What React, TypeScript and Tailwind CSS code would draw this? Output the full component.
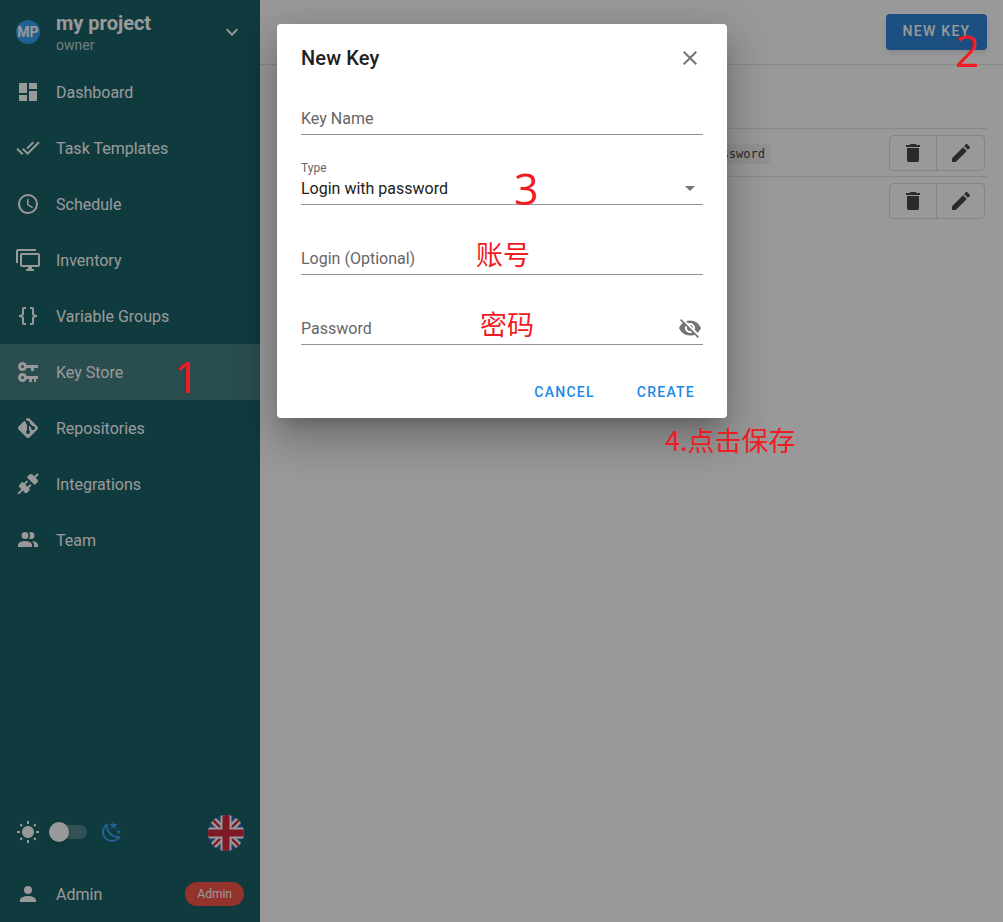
const paths = {
    dashboard: 'M13,3V9H21V3M13,21H21V11H13M3,21H11V15H3M3,13H11V3H3V13Z',
    checkAll: 'M0.41,13.41L6,19L7.41,17.58L1.83,12M22.24,5.58L11.66,16.17L7.5,12L6.07,13.41L11.66,19L23.66,7M18,7L16.59,5.58L10.24,11.93L11.66,13.34L18,7Z',
    clock: 'M12,20A8,8 0 0,0 20,12A8,8 0 0,0 12,4A8,8 0 0,0 4,12A8,8 0 0,0 12,20M12,2A10,10 0 0,1 22,12A10,10 0 0,1 12,22C6.47,22 2,17.5 2,12A10,10 0 0,1 12,2M12.5,7V12.25L17,14.92L16.25,16.15L11,13V7H12.5Z',
    monitors: 'M22,17V7H6V17H22M22,5A2,2 0 0,1 24,7V17C24,18.11 23.1,19 22,19H16V21H18V23H10V21H12V19H6C4.89,19 4,18.11 4,17V7A2,2 0 0,1 6,5H22M2,3V15H0V3A2,2 0 0,1 2,1H20V3H2Z',
    braces: 'M8,3A2,2 0 0,0 6,5V9A2,2 0 0,1 4,11H3V13H4A2,2 0 0,1 6,15V19A2,2 0 0,0 8,21H10V19H8V14A2,2 0 0,0 6,12A2,2 0 0,0 8,10V5H10V3M16,3A2,2 0 0,1 18,5V9A2,2 0 0,0 20,11H21V13H20A2,2 0 0,0 18,15V19A2,2 0 0,1 16,21H14V19H16V14A2,2 0 0,1 18,12A2,2 0 0,1 16,10V5H14V3H16Z',
    keys: 'M6.5,2C8.46,2 10.13,3.25 10.74,5H22V8H18V11H15V8H10.74C10.13,9.75 8.46,11 6.5,11C4,11 2,9 2,6.5C2,4 4,2 6.5,2M6.5,5A1.5,1.5 0 0,0 5,6.5A1.5,1.5 0 0,0 6.5,8A1.5,1.5 0 0,0 8,6.5A1.5,1.5 0 0,0 6.5,5M6.5,13C8.46,13 10.13,14.25 10.74,16H22V19H20V22H18V19H16V22H13V19H10.74C10.13,20.75 8.46,22 6.5,22C4,22 2,20 2,17.5C2,15 4,13 6.5,13M6.5,16A1.5,1.5 0 0,0 5,17.5A1.5,1.5 0 0,0 6.5,19A1.5,1.5 0 0,0 8,17.5A1.5,1.5 0 0,0 6.5,16Z',
    git: 'M2.6,10.59L8.38,4.8L10.07,6.5C9.83,7.35 10.22,8.28 11,8.73V14.27C10.4,14.61 10,15.26 10,16A2,2 0 0,0 12,18A2,2 0 0,0 14,16C14,15.26 13.6,14.61 13,14.27V9.41L15.07,11.5C15,11.65 15,11.82 15,12A2,2 0 0,0 17,14A2,2 0 0,0 19,12A2,2 0 0,0 17,10C16.82,10 16.65,10 16.5,10.07L13.93,7.5C14.19,6.57 13.71,5.55 12.78,5.16C12.35,5 11.9,4.96 11.5,5.07L9.8,3.38L10.59,2.6C11.37,1.81 12.63,1.81 13.41,2.6L21.4,10.59C22.19,11.37 22.19,12.63 21.4,13.41L13.41,21.4C12.63,22.19 11.37,22.19 10.59,21.4L2.6,13.41C1.81,12.63 1.81,11.37 2.6,10.59Z',
    connection: 'M21.4 7.5C22.2 8.3 22.2 9.6 21.4 10.3L18.6 13.1L10.8 5.3L13.6 2.5C14.4 1.7 15.7 1.7 16.5 2.5L18.3 4.3L21.3 1.3L22.7 2.7L19.7 5.7L21.4 7.5M15.6 13.3L14.2 11.9L11.4 14.7L9.3 12.6L12.1 9.8L10.7 8.4L7.9 11.2L6.4 9.8L3.6 12.6C2.8 13.4 2.8 14.7 3.6 15.4L5.4 17.2L1.4 21.2L2.8 22.6L6.8 18.6L8.6 20.4C9.4 21.2 10.7 21.2 11.4 20.4L14.2 17.6L12.8 16.2L15.6 13.3Z',
    team: 'M16 17V19H2V17S2 13 9 13 16 17 16 17M12.5 7.5A3.5 3.5 0 1 0 9 11A3.5 3.5 0 0 0 12.5 7.5M15.94 13A5.32 5.32 0 0 1 18 17V19H22V17S22 13.37 15.94 13M15 4A3.39 3.39 0 0 0 13.07 4.59A5 5 0 0 1 13.07 10.41A3.39 3.39 0 0 0 15 11A3.5 3.5 0 0 0 15 4Z',
    account: 'M12,4A4,4 0 0,1 16,8A4,4 0 0,1 12,12A4,4 0 0,1 8,8A4,4 0 0,1 12,4M12,14C16.42,14 20,15.79 20,18V20H4V18C4,15.79 7.58,14 12,14Z',
    sun: 'M3.55 19.09L4.96 20.5L6.76 18.71L5.34 17.29M12 6C8.69 6 6 8.69 6 12S8.69 18 12 18 18 15.31 18 12C18 8.68 15.31 6 12 6M20 13H23V11H20M17.24 18.71L19.04 20.5L20.45 19.09L18.66 17.29M20.45 5L19.04 3.6L17.24 5.39L18.66 6.81M13 1H11V4H13M6.76 5.39L4.96 3.6L3.55 5L5.34 6.81L6.76 5.39M1 13H4V11H1M13 20H11V23H13',
    night: 'M17.75,4.09L15.22,6.03L16.13,9.09L13.5,7.28L10.87,9.09L11.78,6.03L9.25,4.09L12.44,4L13.5,1L14.56,4L17.75,4.09M21.25,11L19.61,12.25L20.2,14.23L18.5,13.06L16.8,14.23L17.39,12.25L15.75,11L17.81,10.95L18.5,9L19.19,10.95L21.25,11M18.97,15.95C19.8,15.87 20.69,17.05 20.16,17.8C19.84,18.25 19.5,18.67 19.08,19.07C15.17,23 8.84,23 4.94,19.07C1.03,15.17 1.03,8.83 4.94,4.93C5.34,4.53 5.76,4.17 6.21,3.85C6.96,3.32 8.14,4.21 8.06,5.04C7.79,7.9 8.75,10.87 10.95,13.06C13.14,15.26 16.1,16.22 18.97,15.95M17.33,17.97C14.5,17.81 11.7,16.64 9.53,14.5C7.36,12.31 6.2,9.5 6.04,6.68C3.23,9.82 3.34,14.64 6.35,17.66C9.37,20.67 14.19,20.78 17.33,17.97Z',
    chevron: 'M7.41,8.58L12,13.17L16.59,8.58L18,10L12,16L6,10L7.41,8.58Z',
    trash: 'M19,4H15.5L14.5,3H9.5L8.5,4H5V6H19M6,19A2,2 0 0,0 8,21H16A2,2 0 0,0 18,19V7H6V19Z',
    pencil: 'M20.71,7.04C21.1,6.65 21.1,6 20.71,5.63L18.37,3.29C18,2.9 17.35,2.9 16.96,3.29L15.12,5.12L18.87,8.87M3,17.25V21H6.75L17.81,9.93L14.06,6.18L3,17.25Z',
    close: 'M19,6.41L17.59,5L12,10.59L6.41,5L5,6.41L10.59,12L5,17.59L6.41,19L12,13.41L17.59,19L19,17.59L13.41,12L19,6.41Z',
    caret: 'M7,10L12,15L17,10H7Z',
    eyeOff: 'M11.83,9L15,12.16C15,12.11 15,12.05 15,12A3,3 0 0,0 12,9C11.94,9 11.89,9 11.83,9M7.53,9.8L9.08,11.35C9.03,11.56 9,11.77 9,12A3,3 0 0,0 12,15C12.22,15 12.44,14.97 12.65,14.92L14.2,16.47C13.53,16.8 12.79,17 12,17A5,5 0 0,1 7,12C7,11.21 7.2,10.47 7.53,9.8M2,4.27L4.28,6.55L4.73,7C3.08,8.3 1.78,10 1,12C2.73,16.39 7,19.5 12,19.5C13.55,19.5 15.03,19.2 16.38,18.66L16.81,19.08L19.73,22L21,20.73L3.27,3M12,7A5,5 0 0,1 17,12C17,12.64 16.87,13.26 16.64,13.82L19.57,16.75C21.07,15.5 22.27,13.86 23,12C21.27,7.61 17,4.5 12,4.5C10.6,4.5 9.26,4.75 8,5.2L10.17,7.35C10.74,7.13 11.35,7 12,7Z',
};

function Icon({ d, className = '' }: { d: string; className?: string }) {
    return (
        <svg viewBox="0 0 24 24" className={`w-6 h-6 shrink-0 fill-current ${className}`}>
            <path d={d} />
        </svg>
    );
}

const navItems = [
    { label: 'Dashboard', icon: paths.dashboard },
    { label: 'Task Templates', icon: paths.checkAll },
    { label: 'Schedule', icon: paths.clock },
    { label: 'Inventory', icon: paths.monitors },
    { label: 'Variable Groups', icon: paths.braces },
    { label: 'Key Store', icon: paths.keys, active: true },
    { label: 'Repositories', icon: paths.git },
    { label: 'Integrations', icon: paths.connection },
    { label: 'Team', icon: paths.team },
];

function UkFlag() {
    return (
        <svg viewBox="0 0 36 36" className="w-9 h-9 rounded-full shrink-0">
            <rect width="36" height="36" fill="#1f4ea8" />
            <path d="M0 0L36 36M36 0L0 36" stroke="#fff" strokeWidth="7" />
            <path d="M0 0L36 36M36 0L0 36" stroke="#cf142b" strokeWidth="2.4" />
            <path d="M18 0V36M0 18H36" stroke="#fff" strokeWidth="11" />
            <path d="M18 0V36M0 18H36" stroke="#cf142b" strokeWidth="7" />
        </svg>
    );
}

function Sidebar() {
    return (
        <aside className="w-[260px] shrink-0 h-full bg-[#005057] text-white flex flex-col">
            <div className="h-[64px] flex items-center pl-4 pr-4 shrink-0">
                <div className="w-6 h-6 rounded-full bg-[#2196f3] flex items-center justify-center text-[14px] font-bold">MP</div>
                <div className="ml-4 flex-1">
                    <div className="text-[20px] leading-[24px] font-bold">my project</div>
                    <div className="text-[14px] leading-[18px] opacity-70 mt-[1px]">owner</div>
                </div>
                <Icon d={paths.chevron} />
            </div>

            {navItems.map((item) => (
                <div key={item.label} className={`h-[56px] shrink-0 flex items-center pl-4 ${item.active ? 'bg-white/[0.2]' : ''}`}>
                    <Icon d={item.icon} />
                    <span className="ml-4 text-[16px] pt-[2px]">{item.label}</span>
                </div>
            ))}

            <div className="mt-auto h-[62px] flex items-center pl-4 pr-4">
                <Icon d={paths.sun} />
                <div className="relative w-[38px] h-[14px] rounded-full bg-white/[0.25] ml-[9px] mr-[13px]">
                    <div className="absolute left-0 -top-[3px] w-5 h-5 rounded-full bg-white shadow-md" />
                </div>
                <Icon d={paths.night} className="text-[#2196f3]" />
                <div className="ml-auto mt-[2px]"><UkFlag /></div>
            </div>

            <div className="h-[62px] flex items-center pl-4 pr-4 shrink-0 mb-[-3px]">
                <Icon d={paths.account} />
                <span className="ml-4 text-[16px] pt-[2px]">Admin</span>
                <span className="ml-auto h-6 px-3 rounded-full bg-[#f44336] text-[12px] flex items-center">Admin</span>
            </div>
        </aside>
    );
}

function KeyRow({ last }: { last?: boolean }) {
    return (
        <div className={`h-[48px] flex items-center justify-end pr-[2px] ${last ? '' : 'border-b border-[#e0e0e0]'}`}>
            {!last && (
                <div className="mr-[119px] mt-[2px] rounded-[3px] bg-black/[0.05] px-[5px] py-[2px] text-[12px] leading-[16px] text-[#333] font-['DejaVu_Sans_Mono',monospace]">
                    login_password
                </div>
            )}
            <div className="flex h-9 border border-[#d8d8d8] rounded-[4px] text-[#333]">
                <div className="w-[47px] flex items-center justify-center border-r border-[#d8d8d8]"><Icon d={paths.trash} /></div>
                <div className="w-[47px] flex items-center justify-center"><Icon d={paths.pencil} /></div>
            </div>
        </div>
    );
}

function Main() {
    return (
        <main className="flex-1 h-full bg-white">
            <div className="h-[65px] flex items-center justify-end border-b border-[#e0e0e0] pr-4 pb-[1px]">
                <button className="w-[101px] h-9 rounded-[4px] bg-[#1976d2] text-white text-[14px] font-medium tracking-[0.09em] shadow-md">NEW KEY</button>
            </div>
            <div className="ml-4 mr-4 mt-[63px] border-t border-[#e0e0e0]">
                <KeyRow />
                <KeyRow last />
            </div>
        </main>
    );
}

function Field({ label, trailing }: { label: string; trailing?: string }) {
    return (
        <div className="h-[42px] flex items-end justify-between border-b border-[#949494] pb-[3px]">
            <span className="text-[16px] leading-[24px] text-[#666]">{label}</span>
            {trailing && <Icon d={trailing} className="text-[#757575] mr-px mb-px" />}
        </div>
    );
}

function Dialog() {
    return (
        <div className="absolute left-[277px] top-[24px] w-[450px] h-[394px] bg-white rounded-[4px] shadow-[0_11px_15px_-7px_rgba(0,0,0,0.2),0_24px_38px_3px_rgba(0,0,0,0.14),0_9px_46px_8px_rgba(0,0,0,0.12)]">
            <div className="h-[68px] flex items-center justify-between pl-6 pr-6">
                <span className="text-[20px] font-medium text-[#212121] tracking-[0.006em]">New Key</span>
                <Icon d={paths.close} className="text-[#757575] mr-px" />
            </div>
            <div className="px-6 pt-px flex flex-col gap-[28px]">
                <Field label="Key Name" />
                <div className="h-[42px] flex flex-col justify-end border-b border-[#949494] pb-[3px] relative">
                    <span className="text-[12px] leading-[14px] mb-[2px] text-[#666]">Type</span>
                    <span className="text-[16px] leading-[24px] text-[#212121]">Login with password</span>
                    <Icon d={paths.caret} className="absolute right-px bottom-[4px] text-[#757575]" />
                </div>
                <Field label="Login (Optional)" />
                <Field label="Password" trailing={paths.eyeOff} />
            </div>
            <div className="mt-[29px] flex justify-end gap-[10px] pr-[16px]">
                <button className="h-9 px-4 text-[14px] font-medium tracking-[0.0892857em] text-[#1e88e5]">CANCEL</button>
                <button className="h-9 px-4 text-[14px] font-medium tracking-[0.0892857em] text-[#1e88e5]">CREATE</button>
            </div>
        </div>
    );
}

// red notes drawn on top of the screenshot
const notes = [
    { text: '1', cls: "left-[174px] top-[349px] text-[43px] font-['Open_Sans',sans-serif]" },
    { text: '2', cls: "left-[955px] top-[23px] text-[43px] font-['Open_Sans',sans-serif]" },
    { text: '3', cls: "left-[514px] top-[161px] text-[43px] font-['Open_Sans',sans-serif]" },
    { text: '账号', cls: "left-[476px] top-[236px] text-[27px] font-['Noto_Sans_CJK_SC',sans-serif]" },
    { text: '密码', cls: "left-[480px] top-[306px] text-[27px] font-['Noto_Sans_CJK_SC',sans-serif]" },
    { text: '4.点击保存', cls: "left-[665px] top-[422px] text-[27px] font-['Noto_Sans_CJK_SC',sans-serif]" },
];

export default function App() {
    return (
        <div className="relative w-[1003px] h-[922px] overflow-hidden flex font-['Roboto',sans-serif]">
            <Sidebar />
            <Main />
            <div className="absolute inset-0 bg-[#212121]/[0.46]" />
            <Dialog />
            {notes.map((n) => (
                <span key={n.text} className={`absolute leading-[1.3] text-[#f01c24] ${n.cls}`}>{n.text}</span>
            ))}
        </div>
    );
}
